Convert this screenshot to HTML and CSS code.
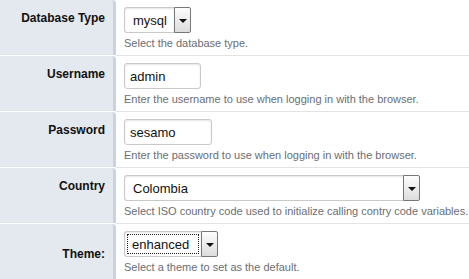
FILE: index.html
```html
<!DOCTYPE html>
<html>
<head>
    <title>Settings</title>
    <link rel="stylesheet" href="styles.css">
</head>
<body>
    <div class="settings">

        <!-- Database type -->
        <div class="row">
            <div class="label">Database Type</div>
            <div class="field">
                <div class="select select-db">
                    <span class="value">mysql</span>
                    <span class="arrow"></span>
                </div>
                <p class="help">Select the database type.</p>
            </div>
        </div>

        <!-- Username -->
        <div class="row">
            <div class="label">Username</div>
            <div class="field">
                <input class="text text-user" type="text" value="admin">
                <p class="help">Enter the username to use when logging in with the browser.</p>
            </div>
        </div>

        <!-- Password -->
        <div class="row">
            <div class="label">Password</div>
            <div class="field">
                <input class="text text-pass" type="text" value="sesamo">
                <p class="help">Enter the password to use when logging in with the browser.</p>
            </div>
        </div>

        <!-- Country -->
        <div class="row">
            <div class="label">Country</div>
            <div class="field">
                <div class="select select-country">
                    <span class="value">Colombia</span>
                    <span class="arrow"></span>
                </div>
                <p class="help">Select ISO country code used to initialize calling contry code variables.</p>
            </div>
        </div>

        <!-- Theme -->
        <div class="row row-last">
            <div class="label label-middle">Theme:</div>
            <div class="field">
                <div class="select select-theme">
                    <span class="value focused">enhanced</span>
                    <span class="arrow"></span>
                </div>
                <p class="help">Select a theme to set as the default.</p>
            </div>
        </div>

    </div>
</body>
</html>
```

FILE: styles.css
```css
body {
    margin: 0;
    background-color: #fff;
    font-family: "Liberation Sans", Arial, sans-serif;
}

.settings {
    width: 469px;
}

.row {
    display: flex;
    height: 55px;
    border-bottom: 1px solid #fff;
}

.label {
    width: 105px;
    padding: 11px 8px 0 0;
    background-color: #e4e8ef;
    border-right: 3px solid #cdd1d8;
    border-top-right-radius: 4px;
    text-align: right;
    font-size: 12px;
    font-weight: bold;
    color: #111;
}

.label-middle {
    padding-top: 23px;
}

.field {
    flex: 1;
    padding: 7px 0 0 8px;
    border-bottom: 1px solid #e3e3e3;
    margin-bottom: -1px;
}

.row-last .field {
    border-bottom: none;
}

.text {
    display: block;
    box-sizing: border-box;
    height: 26px;
    margin: 0;
    padding: 0 5px;
    border: 1px solid #c9c9c9;
    border-radius: 3px;
    box-shadow: inset 0 1px 2px #e6e6e6;
    font-family: "Liberation Sans", Arial, sans-serif;
    font-size: 13px;
    color: #111;
    outline: none;
}

.text-user {
    width: 77px;
}

.text-pass {
    width: 88px;
}

.select {
    display: flex;
    box-sizing: border-box;
    height: 26px;
}

.select-db {
    width: 67px;
}

.select-country {
    width: 296px;
}

.select-theme {
    width: 94px;
}

.value {
    flex: 1;
    display: flex;
    align-items: center;
    padding-left: 8px;
    border: 1px solid #c9c9c9;
    border-right: none;
    border-radius: 3px 0 0 3px;
    box-shadow: inset 0 1px 2px #e6e6e6;
    font-size: 13px;
    color: #111;
}

.focused {
    position: relative;
    padding-left: 7px;
}

.focused::after {
    content: "";
    position: absolute;
    left: 2px;
    right: 2px;
    top: 2px;
    bottom: 2px;
    border: 1px dotted #222;
}

.arrow {
    position: relative;
    width: 15px;
    border: 1px solid #777;
    border-radius: 0 2px 2px 0;
    background: linear-gradient(to bottom, #fdfdfd, #dcdcdc);
}

.arrow::after {
    content: "";
    position: absolute;
    left: 4px;
    top: 11px;
    border-left: 4px solid transparent;
    border-right: 4px solid transparent;
    border-top: 4px solid #111;
}

.help {
    margin: 4px 0 0;
    font-size: 11px;
    color: #6b6e73;
    white-space: nowrap;
}
```
